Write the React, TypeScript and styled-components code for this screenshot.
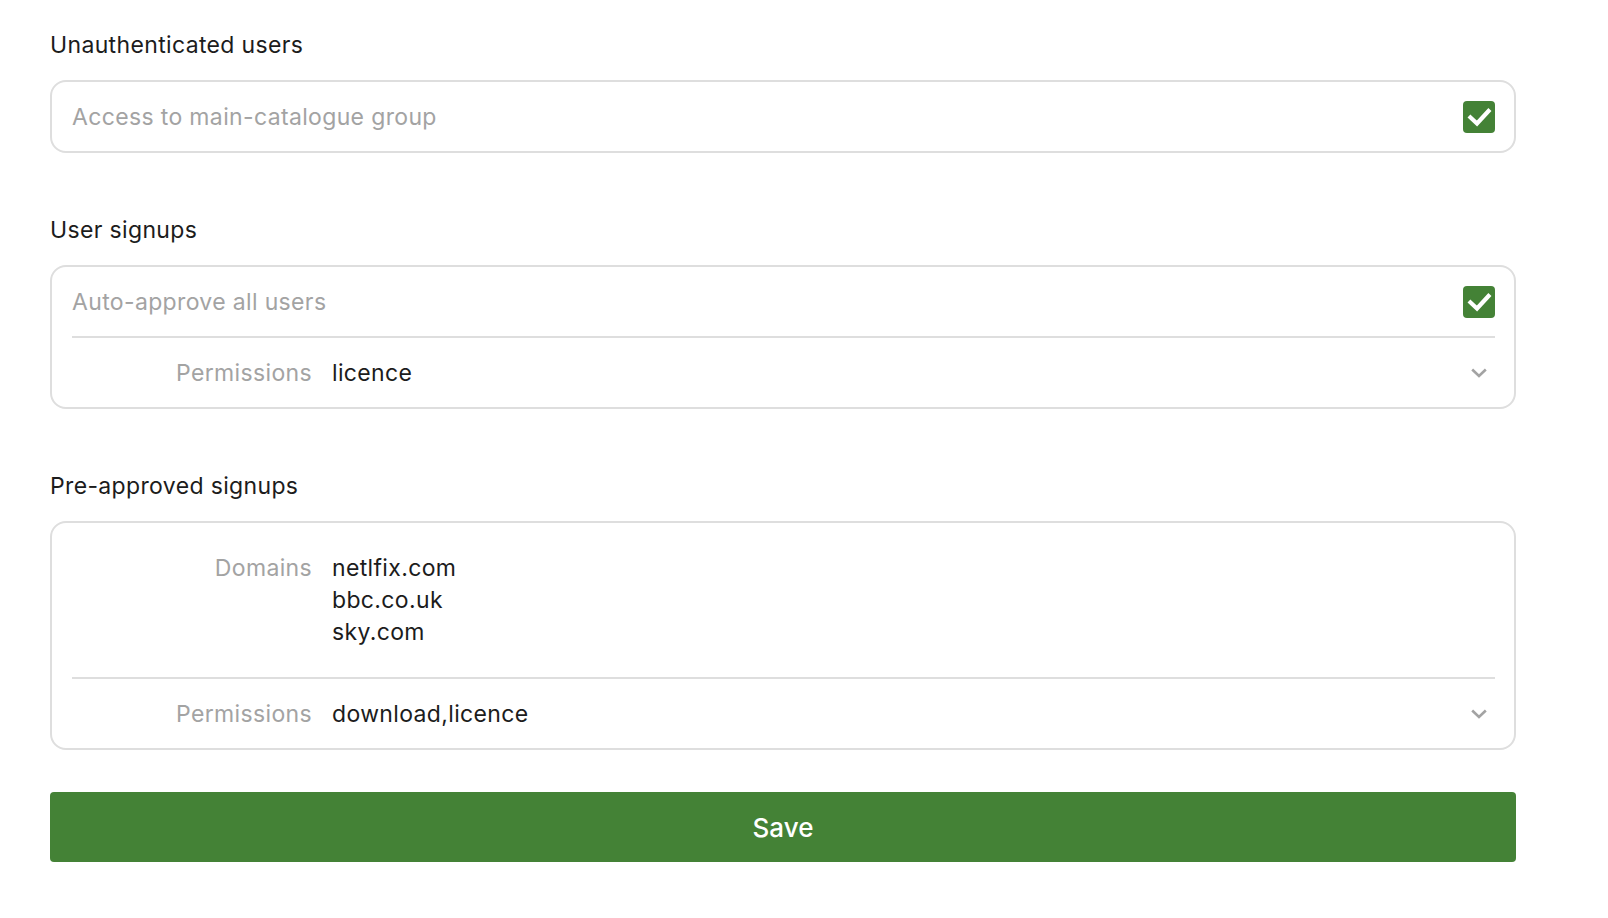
import React from 'react';
import styled, { createGlobalStyle } from 'styled-components';

const GlobalStyle = createGlobalStyle`
  html, body {
    margin: 0;
    padding: 0;
    background: #ffffff;
  }
  body {
    font-family: Inter, "Noto Sans", "Liberation Sans", sans-serif;
    color: #1c1c1c;
    -webkit-font-smoothing: antialiased;
  }
`;

const Page = styled.div`
  width: 1466px;
  padding: 29px 0 0 50px;
  display: flex;
  flex-direction: column;
`;

const Section = styled.section`
  display: flex;
  flex-direction: column;
  gap: 19px;
  margin-bottom: 61px;

  &:last-of-type {
    margin-bottom: 42px;
  }
`;

const SectionTitle = styled.h2`
  margin: 0;
  font-size: 23px;
  letter-spacing: 0.35px;
  line-height: 32px;
  font-weight: 400;
  color: #1c1c1c;
`;

const Card = styled.div`
  border: 2px solid #dedede;
  border-radius: 16px;
  padding: 0 19px 0 20px;
  display: flex;
  flex-direction: column;
`;

const Row = styled.div<{ $tall?: boolean }>`
  display: flex;
  align-items: ${(p) => (p.$tall ? 'flex-start' : 'center')};
  min-height: ${(p) => (p.$tall ? '0' : '69px')};
  padding: ${(p) => (p.$tall ? '29px 0' : '0')};
  box-sizing: content-box;

  & + & {
    border-top: 2px solid #dedede;
  }
`;

const Text = styled.span`
  font-size: 23px;
  letter-spacing: 0.35px;
  line-height: 32px;
`;

const Placeholder = styled(Text)`
  flex: 1;
  color: #a3a3a3;
`;

const Label = styled(Text)`
  width: 240px;
  flex-shrink: 0;
  text-align: right;
  color: #a3a3a3;
`;

const Value = styled(Text)`
  flex: 1;
  margin-left: 20px;
  color: #1c1c1c;
  display: flex;
  flex-direction: column;
`;

const Check = styled.span`
  width: 32px;
  height: 32px;
  border-radius: 4px;
  background: #448236;
  display: flex;
  align-items: center;
  justify-content: center;
  flex-shrink: 0;
`;

const Chevron = styled.span`
  width: 32px;
  height: 32px;
  display: flex;
  align-items: center;
  justify-content: center;
  flex-shrink: 0;
`;

const SaveButton = styled.button`
  width: 1466px;
  height: 70px;
  border: none;
  border-radius: 4px;
  background: #448236;
  color: #ffffff;
  font-family: inherit;
  font-size: 26px;
  font-weight: 500;
  cursor: pointer;
`;

const CheckBox: React.FC = () => (
  <Check>
    <svg width="32" height="32" viewBox="0 0 32 32">
      <path
        d="M7.5 16.5 L14 22.5 L25.5 10"
        fill="none"
        stroke="#ffffff"
        strokeWidth="4.2"
        strokeLinecap="square"
      />
    </svg>
  </Check>
);

const ChevronDown: React.FC = () => (
  <Chevron>
    <svg width="16" height="10" viewBox="0 0 16 10">
      <path
        d="M1.2 1.5 L8 8 L14.8 1.5"
        fill="none"
        stroke="#a3a3a3"
        strokeWidth="2.6"
      />
    </svg>
  </Chevron>
);

const App: React.FC = () => {
  const domains = ['netlfix.com', 'bbc.co.uk', 'sky.com'];

  return (
    <>
      <GlobalStyle />
      <Page>
        <Section>
          <SectionTitle>Unauthenticated users</SectionTitle>
          <Card>
            <Row>
              <Placeholder>Access to main-catalogue group</Placeholder>
              <CheckBox />
            </Row>
          </Card>
        </Section>

        <Section>
          <SectionTitle>User signups</SectionTitle>
          <Card>
            <Row>
              <Placeholder>Auto-approve all users</Placeholder>
              <CheckBox />
            </Row>
            <Row>
              <Label>Permissions</Label>
              <Value>licence</Value>
              <ChevronDown />
            </Row>
          </Card>
        </Section>

        <Section>
          <SectionTitle>Pre-approved signups</SectionTitle>
          <Card>
            <Row $tall>
              <Label>Domains</Label>
              <Value>
                {domains.map((d) => (
                  <span key={d}>{d}</span>
                ))}
              </Value>
            </Row>
            <Row>
              <Label>Permissions</Label>
              <Value>download,licence</Value>
              <ChevronDown />
            </Row>
          </Card>
        </Section>

        <SaveButton>Save</SaveButton>
      </Page>
    </>
  );
};

export default App;
